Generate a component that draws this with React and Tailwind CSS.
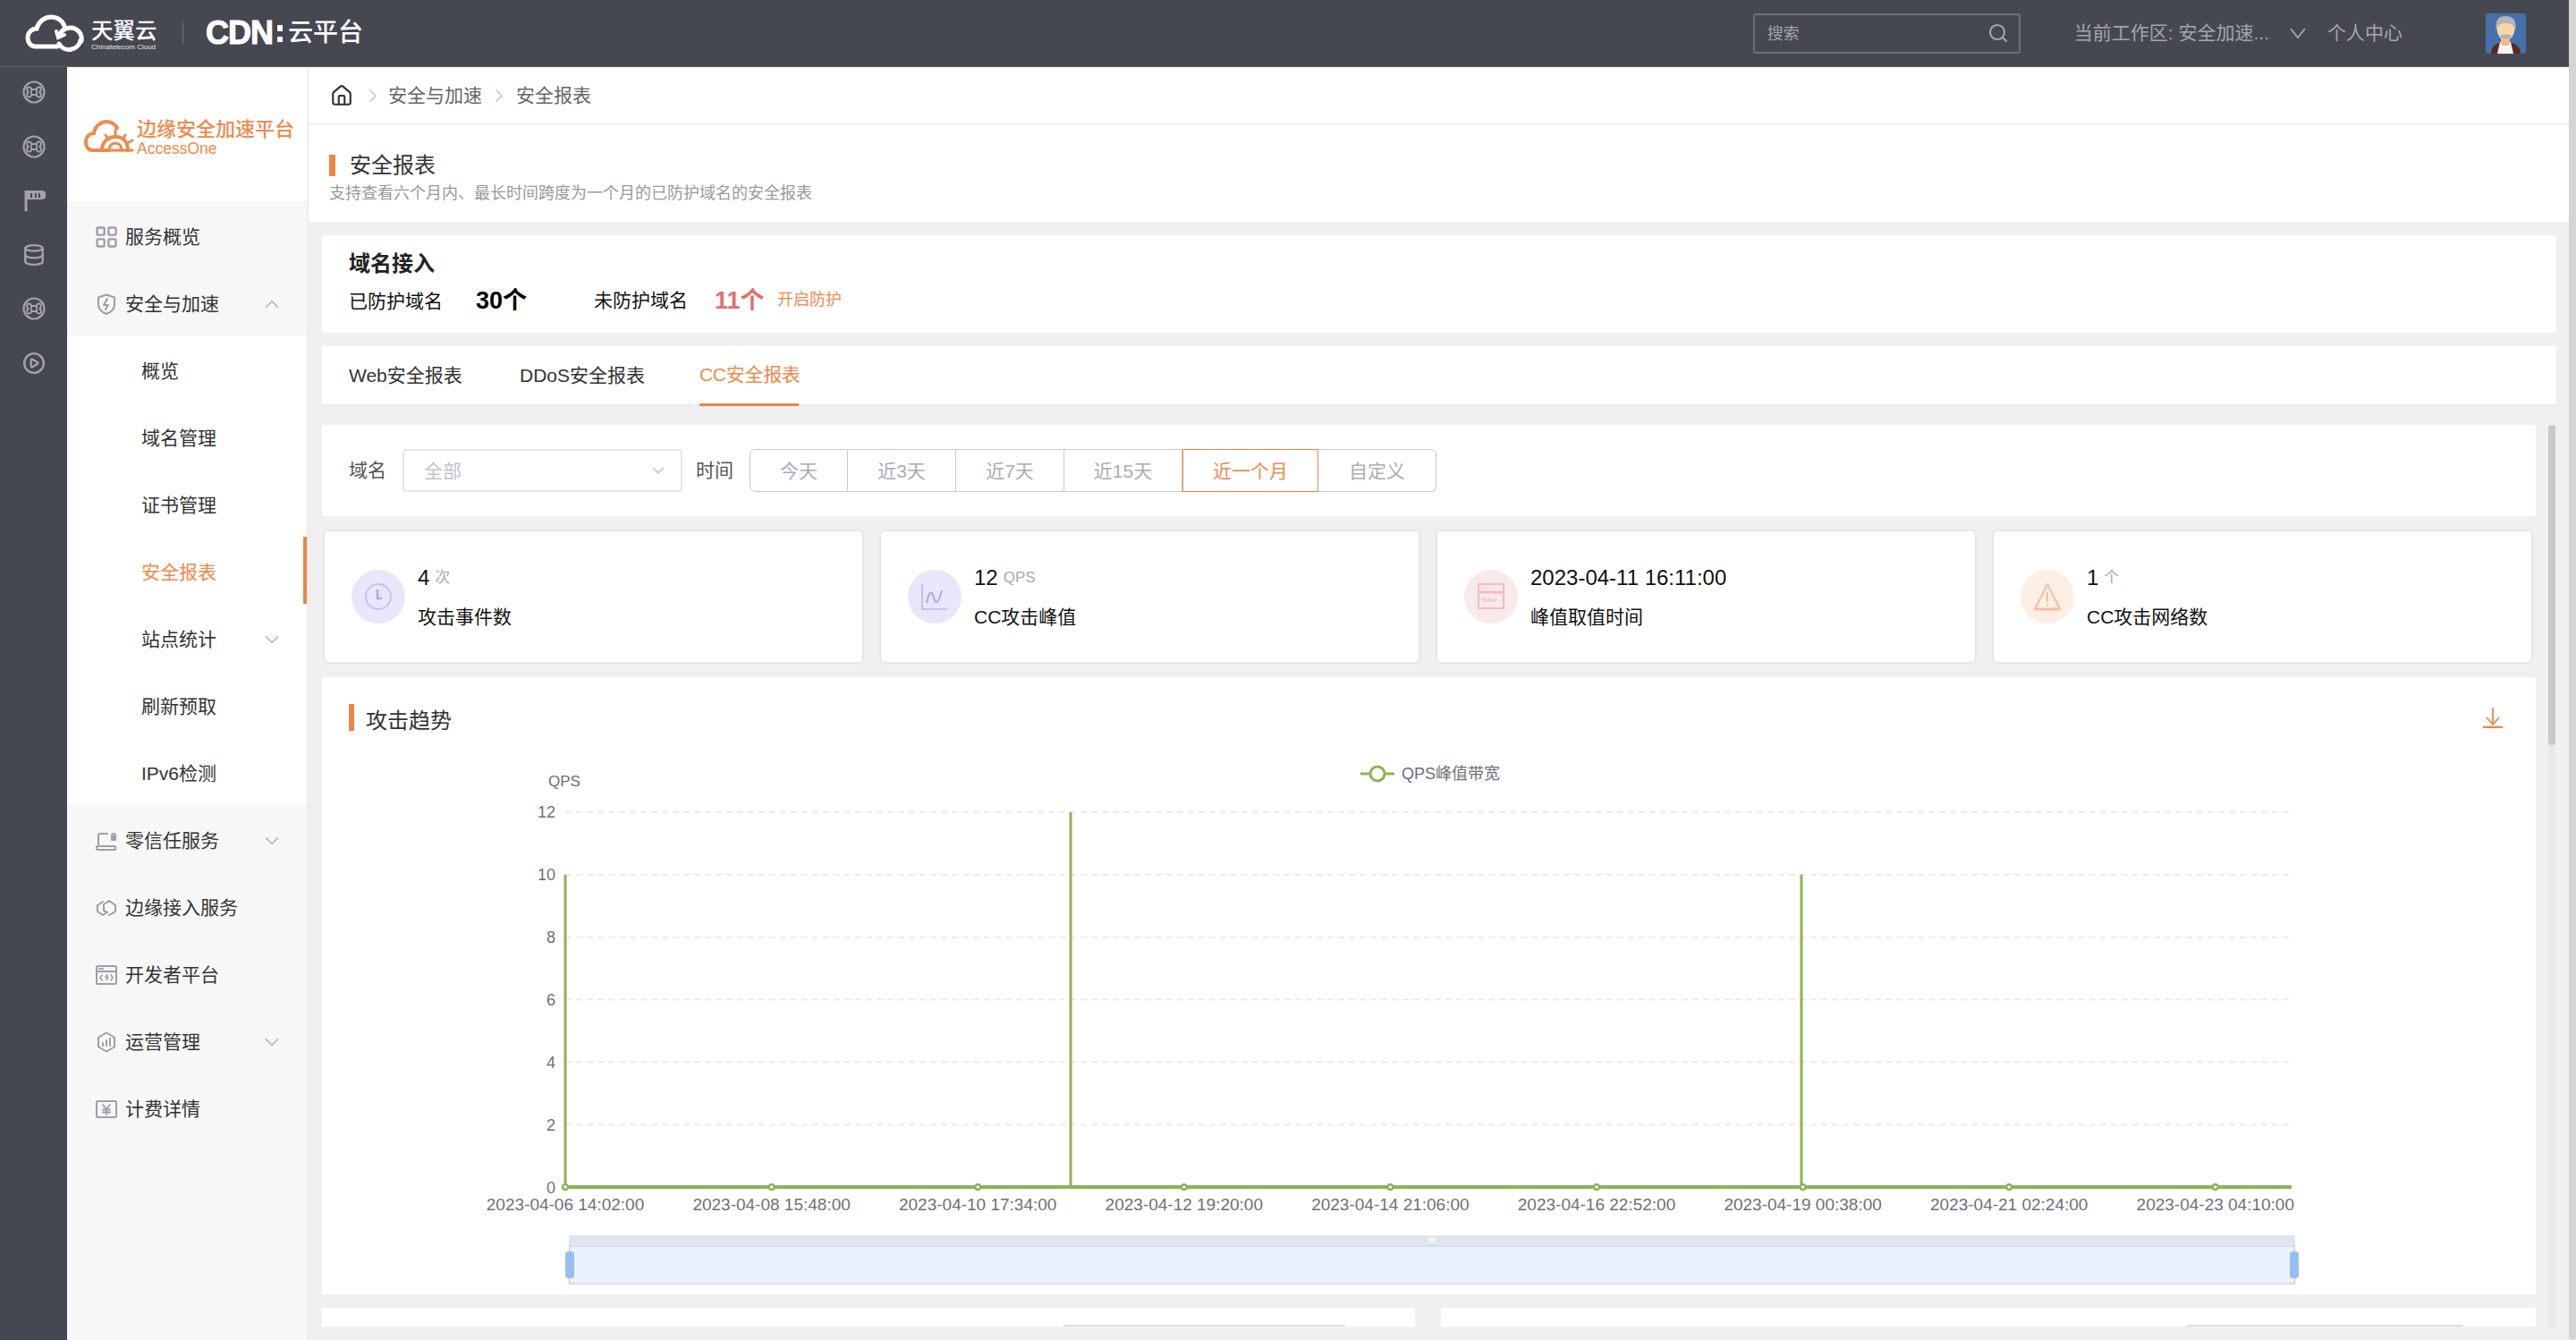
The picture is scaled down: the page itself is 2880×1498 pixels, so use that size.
import { ChevronDown, ChevronUp, ChevronRight, Search, Database, CirclePlay, LayoutGrid, Home } from 'lucide-react'

const fontStack = "font-['Liberation_Sans','Noto_Sans_CJK_SC',sans-serif]"

const CircleCmd = () => (
    <svg width="26" height="26" viewBox="0 0 26 26" fill="none" stroke="#a1a3a9" strokeWidth="2.2">
        <circle cx="13" cy="13" r="11.5" />
        <path d="M10 10h6v6h-6z M10 10a2.5 2.5 0 1 0-2.5 2.5 M16 10a2.5 2.5 0 1 1 2.5 2.5 M10 16a2.5 2.5 0 1 1-2.5-2.5 M16 16a2.5 2.5 0 1 0 2.5-2.5" strokeWidth="1.8" />
    </svg>
)

const FlagIcon = () => (
    <svg width="26" height="26" viewBox="0 0 26 26" fill="none" stroke="#a1a3a9" strokeWidth="2">
        <path d="M4 2v23" strokeWidth="3" />
        <path d="M4 3h18a2 2 0 0 1 0 8H4z" fill="#a1a3a9" />
        <path d="M10 5v5M15 5v5M19 5v5" stroke="#454851" strokeWidth="2" />
    </svg>
)

const RailIcon = ({ children }) => (
    <div className="h-[60.5px] flex items-center justify-center">{children}</div>
)

const MenuIcon = ({ children }) => (
    <svg width="24" height="24" viewBox="0 0 24 24" fill="none" stroke="#9c9fa8" strokeWidth="2" strokeLinejoin="round" strokeLinecap="round">
        {children}
    </svg>
)

const menuIcons = {
    grid: <LayoutGrid size={28} color="#9c9fa8" strokeWidth={2} className="-ml-[2px]" />,
    shield: <MenuIcon><path d="M12 1.5l9 3v8c0 5-4 8.5-9 10.5-5-2-9-5.5-9-10.500v-8z" /><path d="M13 6l-4 7h5l-3 5" /></MenuIcon>,
    lock: <MenuIcon><path d="M13 4H5a2 2 0 0 0-2 2v11" /><path d="M1 21a2 2 0 0 1 2-3h18a2 2 0 0 1 1 3 1 1 0 0 1-1 1H3a2 2 0 0 1-2-1z" /><rect x="17" y="6" width="6" height="6" rx="1" fill="#9c9fa8" stroke="none" /><path d="M18 6a2 2 0 0 1 4 0" /></MenuIcon>,
    link: <MenuIcon><path d="M8 5L2 9v7l6 4 3-2" /><path d="M15 20l7-4V9l-7-5-6 4v7l4 2" /></MenuIcon>,
    code: <MenuIcon><rect x="1" y="2" width="22" height="20" rx="1.5" /><path d="M1 8h22" /><path d="M4 5h1M7 5h1" /><path d="M7 12l-2 3 2 3M17 12l2 3-2 3M13 11.5l-2 3h3l-2 3" strokeWidth="1.6" /></MenuIcon>,
    hex: <MenuIcon><path d="M12 1.5l9 5.25v10.5l-9 5.25-9-5.25V6.75z" /><path d="M8 16v-3M12 16V10M16 16V8" /></MenuIcon>,
    yen: <MenuIcon><rect x="1" y="3" width="22" height="18" rx="1.5" /><path d="M8 7l4 5 4-5M12 12v6M8 12.5h8M8 15.5h8" strokeWidth="1.8" /></MenuIcon>,
}

const topMenu = [
    { label: '服务概览', icon: 'grid' },
    { label: '安全与加速', icon: 'shield', chevron: 'up' },
]

const subMenu = [
    { label: '概览' },
    { label: '域名管理' },
    { label: '证书管理' },
    { label: '安全报表', active: true },
    { label: '站点统计', chevron: 'down' },
    { label: '刷新预取' },
    { label: 'IPv6检测' },
]

const bottomMenu = [
    { label: '零信任服务', icon: 'lock', chevron: 'down' },
    { label: '边缘接入服务', icon: 'link' },
    { label: '开发者平台', icon: 'code' },
    { label: '运营管理', icon: 'hex', chevron: 'down' },
    { label: '计费详情', icon: 'yen' },
]

const MenuRow = ({ item }) => (
    <div className="h-[75px] flex items-center pl-[32px] pr-[26px] pt-[5px] text-[21px] text-[#333]">
        <span className="w-[33px] flex items-center">{menuIcons[item.icon]}</span>
        <span>{item.label}</span>
        {item.chevron === 'up' && <ChevronUp size={26} color="#aaadb5" strokeWidth={1.3} className="ml-auto" />}
        {item.chevron === 'down' && <ChevronDown size={26} color="#aaadb5" strokeWidth={1.3} className="ml-auto" />}
    </div>
)

const Sidebar = () => (
    <aside className="w-[270px] shrink-0 bg-white border-r-2 border-[#ededed] flex flex-col">
        <div className="h-[150px] flex items-center pl-[19px] pt-[8px]">
            <svg width="56" height="42" viewBox="0 0 56 42" fill="none" stroke="#ed8a4c" strokeWidth="4" strokeLinecap="round">
                <path d="M28 35H10C4 35 2 30 2 26c0-6 4-10 9-10 1-8 8-13 14-13 5 0 10 3 12 7" />
                <path d="M20 35c0-9 6-15 15-15s14 6 14 15" />
                <path d="M28 35c0-5 3-8 7-8s7 3 7 8" strokeWidth="3" />
                <path d="M35 12v6M24 18l3 5M46 18l-3 5M50 26l4-2M18 35h36" strokeWidth="3" />
            </svg>
            <div className="ml-[3px] flex flex-col">
                <span className="text-[22px] leading-[24px] text-[#ed8a4c] font-medium whitespace-nowrap">边缘安全加速平台</span>
                <span className="text-[17.5px] leading-[18px] text-[#ed8a4c]">AccessOne</span>
            </div>
        </div>
        <div className="bg-[#f7f7f7]">
            {topMenu.map((item) => <MenuRow key={item.label} item={item} />)}
        </div>
        {subMenu.map((item) => (
            <div key={item.label} className={`h-[75px] flex items-center pl-[83px] pt-[5px] text-[21px] ${item.active ? 'pr-[22px] text-[#ed8a4c] border-r-4 border-[#ed8546]' : 'pr-[26px] text-[#333]'}`}>
                <span>{item.label}</span>
                {item.chevron && <ChevronDown size={26} color="#aaadb5" strokeWidth={1.3} className="ml-auto" />}
            </div>
        ))}
        <div className="flex-1 bg-[#f7f7f7]">
            {bottomMenu.map((item) => <MenuRow key={item.label} item={item} />)}
        </div>
    </aside>
)

const Header = () => (
    <header className="h-[75px] shrink-0 bg-[#454851] border-b border-[#5b5e66] flex items-center text-white">
        <svg width="68" height="44" viewBox="0 0 68 44" fill="none" stroke="#fff" strokeWidth="5" className="ml-[28px]" strokeLinecap="round">
            <path d="M36 37H12C6 37 3 32 3 27c0-6 5-10 10-10 2-8 9-13 16-13 7 0 13 4 15 10" />
            <path d="M38 26a13 13 0 0 1 22-6 13 13 0 0 1 3 11" />
            <path d="M62 30a13 13 0 0 1-24 4" />
            <path d="M35 20l2 7 7-3" strokeWidth="4" />
        </svg>
        <div className="ml-[6px] flex flex-col w-[76px] pt-[5px]">
            <span className="text-[24.5px] leading-[28px] font-medium whitespace-nowrap">天翼云</span>
            <span className="text-[8px] leading-[10px] -mt-[1px] text-[#e6e6e6] whitespace-nowrap">Chinatelecom Cloud</span>
        </div>
        <div className="ml-[26px] w-[1px] h-[25px] bg-[#70737a]" />
        <span className="ml-[25px] text-[36px] leading-none font-bold tracking-[-1px] [-webkit-text-stroke:1px_white] whitespace-nowrap">CDN</span>
        <div className="ml-[5px] flex flex-col gap-[6px]">
            <div className="w-[6px] h-[7px] bg-white" />
            <div className="w-[6px] h-[6px] bg-white" />
        </div>
        <span className="ml-[6px] text-[28px] leading-none font-medium whitespace-nowrap">云平台</span>
        <div className="ml-auto w-[299px] h-[45px] border-2 border-[#6d7078] rounded-[3px] flex items-center pl-[14px] pr-[11px] text-[18px] text-[#a0a3a8]">
            <span className="pt-[2px]">搜索</span>
            <Search size={24} color="#a0a3a8" strokeWidth={2.2} className="ml-auto" />
        </div>
        <span className="ml-[60px] text-[21px] text-[#a3a6ab] whitespace-nowrap">当前工作区: 安全加速...</span>
        <svg width="18" height="12" viewBox="0 0 18 12" fill="none" stroke="#a3a6ab" strokeWidth="1.8" className="ml-[23px]">
            <path d="M1 1l8 10 8-10" />
        </svg>
        <span className="ml-[24px] text-[21px] text-[#a3a6ab] whitespace-nowrap">个人中心</span>
        <svg width="45" height="45" viewBox="0 0 45 45" className="ml-[93px] mr-[48px] rounded-[3px]">
            <rect width="45" height="45" fill="#4670ab" />
            <path d="M6 45c0-9 6-13 16-13s17 4 17 13z" fill="#5a2d18" />
            <path d="M13 45l3-13h12l3 13z" fill="#f3f3f3" />
            <path d="M17 26h10v8c-2 3-8 3-10 0z" fill="#f2b88a" />
            <ellipse cx="22.5" cy="17" rx="10" ry="13" fill="#f9d7ae" />
            <path d="M12 20C10 8 14 3 22.5 3S35 8 33 20c-1-6-3-9-10.5-9S13 14 12 20z" fill="#b5b5b5" />
            <path d="M16 25c3-2 10-2 13 0-1 3-3 4-6.5 4S17 28 16 25z" fill="#b9b0a4" />
        </svg>
    </header>
)

const Breadcrumb = () => (
    <div className="h-[65px] shrink-0 bg-white border-b-2 border-[#f0f0f0] flex items-center pl-[24px] text-[21px] text-[#666]">
        <Home size={26} color="#333" strokeWidth={2} />
        <ChevronRight size={24} color="#c0c4cc" strokeWidth={1.5} className="ml-[10px]" />
        <span className="ml-[5px]">安全与加速</span>
        <ChevronRight size={24} color="#c0c4cc" strokeWidth={1.5} className="ml-[7px]" />
        <span className="ml-[7px]">安全报表</span>
    </div>
)

const PageTitle = () => (
    <div className="h-[108px] shrink-0 bg-white pl-[23px] pt-[33px]">
        <div className="flex items-center h-[24px]">
            <div className="w-[7px] h-[24px] bg-[#ed8546]" />
            <span className="ml-[16px] text-[24px] text-[#333]">安全报表</span>
        </div>
        <p className="mt-[7px] text-[18px] leading-[24px] text-[#999]">支持查看六个月内、最长时间跨度为一个月的已防护域名的安全报表</p>
    </div>
)

const DomainCard = () => (
    <div className="h-[109px] bg-white pl-[30px] pt-[18px]">
        <div className="text-[24px] leading-[28px] font-bold text-[#222]">域名接入</div>
        <div className="flex items-center mt-[9px] h-[36px]">
            <span className="w-[142px] text-[21px] pt-[2px] text-[#111]">已防护域名</span>
            <span className="w-[132px] text-[27px] font-bold text-black">30个</span>
            <span className="w-[135px] text-[21px] text-[#111]">未防护域名</span>
            <span className="w-[70px] text-[27px] font-bold text-[#e26f6f]">11个</span>
            <span className="text-[18px] text-[#ed8a4c] -mt-[2px]">开启防护</span>
        </div>
    </div>
)

const Tabs = () => (
    <div className="h-[67px] mt-[15px] bg-white border-b-2 border-[#eaeaea] flex pl-[30px] text-[21px] text-[#333] whitespace-nowrap">
        <div className="w-[191px] flex items-center">Web安全报表</div>
        <div className="w-[201px] flex items-center">DDoS安全报表</div>
        <div className="w-[111px] h-[67px] flex items-center text-[#ed8a4c] border-b-[3px] border-[#ed8546] tracking-[-0.3px]">CC安全报表</div>
    </div>
)

const ranges = [
    { label: '今天', w: 'w-[110px]', cls: 'rounded-l-[6px] border-l' },
    { label: '近3天', w: 'w-[121px]', cls: '' },
    { label: '近7天', w: 'w-[121px]', cls: '' },
    { label: '近15天', w: 'w-[132px]', cls: '' },
    { label: '近一个月', w: 'w-[152px]', active: true, cls: '' },
    { label: '自定义', w: 'w-[132px]', cls: 'rounded-r-[6px]' },
]

const FilterBar = () => (
    <div className="h-[102px] bg-white flex items-center pl-[30px] text-[21px] text-[#555]">
        <span className="w-[60px]">域名</span>
        <div className="w-[313px] h-[48px] border-2 border-[#e4e6ec] rounded-[4px] flex items-center pl-[22px] pr-[14px] text-[#c0c4cc]">
            <span className="pt-[2px]">全部</span>
            <ChevronDown size={22} color="#b9bcc6" strokeWidth={1.5} className="ml-auto" />
        </div>
        <span className="ml-[15px] w-[60px]">时间</span>
        <div className="flex h-[48px]">
            {ranges.map((r) => (
                <div key={r.label} className={`${r.w} ${r.cls} pt-[2px] flex items-center justify-center ${r.active ? 'border-[1.5px] border-[#ed8546] text-[#ed8a4c]' : 'border-y-[1.5px] border-r border-[#c4c8d3] text-[#a9acb4]'}`}>{r.label}</div>
            ))}
        </div>
    </div>
)

const statIcons = {
    clock: (
        <svg width="38" height="38" viewBox="0 0 38 38" fill="none" stroke="#c6bff2" strokeWidth="2">
            <circle cx="19" cy="19" r="14" />
            <path d="M18 11v10h5" stroke="#b0a7ee" strokeWidth="2.5" />
        </svg>
    ),
    chart: (
        <svg width="38" height="38" viewBox="0 0 38 38" fill="none" stroke="#c6bff2" strokeWidth="2">
            <path d="M5 5v28h28" />
            <path d="M10 26c3-14 6-14 8-6s5 8 9-8" stroke="#b0a7ee" />
        </svg>
    ),
    www: (
        <svg width="38" height="38" viewBox="0 0 38 38" fill="none" stroke="#f6bcbc" strokeWidth="2">
            <rect x="5" y="5" width="28" height="27" />
            <path d="M5 14h28" strokeWidth="3" />
            <path d="M9 9.5h1M13 9.5h1" strokeWidth="3" />
            <path d="M9 20l2 5 2-4 2 4 2-5 2 5 2-4 2 4 2-5" strokeWidth="1" />
        </svg>
    ),
    warn: (
        <svg width="38" height="38" viewBox="0 0 38 38" fill="none" stroke="#f8bd9a" strokeWidth="2" strokeLinejoin="round">
            <path d="M19 5L5 33h28z" />
            <path d="M19 14v11M19 28v1.5" />
            <path d="M5 33h28" strokeWidth="3" />
        </svg>
    ),
}

const stats = [
    { value: '4', unit: '次', label: '攻击事件数', icon: 'clock', bg: 'bg-[#e9e6fb]' },
    { value: '12', unit: 'QPS', label: 'CC攻击峰值', icon: 'chart', bg: 'bg-[#e9e6fb]' },
    { value: '2023-04-11 16:11:00', unit: '', label: '峰值取值时间', icon: 'www', bg: 'bg-[#f8e9ea]' },
    { value: '1', unit: '个', label: 'CC攻击网络数', icon: 'warn', bg: 'bg-[#fdeee6]' },
]

const StatCards = () => (
    <div className="mt-[15px] h-[150px] flex gap-[17px] pl-[1px]">
        {stats.map((s) => (
            <div key={s.label} className="w-[605px] bg-white border-2 border-[#e6e6e6] rounded-[6px] flex items-center pl-[30px]">
                <div className={`w-[60px] h-[60px] rounded-full flex items-center justify-center ${s.bg}`}>{statIcons[s.icon]}</div>
                <div className="ml-[14px] flex flex-col">
                    <div className="h-[36px] flex items-center whitespace-nowrap -mt-[2px]">
                        <span className="text-[24px] text-[#111]">{s.value}</span>
                        {s.unit && <span className="ml-[6px] text-[17px] text-[#aaa]">{s.unit}</span>}
                    </div>
                    <span className="mt-[12px] text-[21px] leading-[28px] text-[#111]">{s.label}</span>
                </div>
            </div>
        ))}
    </div>
)

const yTicks = [12, 10, 8, 6, 4, 2, 0]
const xTicks = [
    '2023-04-06 14:02:00', '2023-04-08 15:48:00', '2023-04-10 17:34:00', '2023-04-12 19:20:00', '2023-04-14 21:06:00',
    '2023-04-16 22:52:00', '2023-04-19 00:38:00', '2023-04-21 02:24:00', '2023-04-23 04:10:00',
]

// chart coordinates: svg starts 360 from page left, 834 from page top
const yPos = (v) => 493 - v * 34.92
const xPos = (i) => 272 + i * 230.6

const TrendChart = () => (
    <svg width="2475" height="547" viewBox="0 0 2475 547" className="block">
        <g fontFamily="'Liberation Sans','Noto Sans CJK SC',sans-serif">
            <text x="271" y="45" textAnchor="middle" fontSize="17" fill="#6e7079">QPS</text>
            {yTicks.map((t) => (
                <g key={t}>
                    {t > 0 && <line x1="272" x2="2202" y1={yPos(t)} y2={yPos(t)} stroke="#e0e6f1" strokeWidth="1.5" strokeDasharray="7 5" />}
                    <text x="261" y={yPos(t) + 6.5} textAnchor="end" fontSize="18" fill="#6e7079">{t}</text>
                </g>
            ))}
            {xTicks.map((t, i) => (
                <text key={t} x={xPos(i)} y={519} textAnchor="middle" fontSize="19" fill="#6e7079">{t}</text>
            ))}
            <path d={`M272 ${yPos(10)}V${yPos(0)}M837 ${yPos(0)}V${yPos(12)}M1654 ${yPos(0)}V${yPos(10)}`} fill="none" stroke="#8fb155" strokeWidth="3" />
            <path d={`M272 ${yPos(0)}H2202`} fill="none" stroke="#8fb155" strokeWidth="4" />
            {xTicks.map((t, i) => (
                <circle key={t} cx={xPos(i)} cy={yPos(0)} r="3" fill="#fff" stroke="#8fb155" strokeWidth="2.5" />
            ))}
            <path d="M1161 31h38" stroke="#8fb155" strokeWidth="3" />
            <circle cx="1180" cy="31" r="8" fill="#fff" stroke="#8fb155" strokeWidth="3" />
            <text x="1207" y="37" fontSize="18" fill="#6e7079">QPS峰值带宽</text>
        </g>
    </svg>
)

const DataZoom = () => (
    <div className="ml-[276px] w-[1930px] flex flex-col">
        <div className="h-[11px] bg-[#dfe4ef] flex items-center justify-center gap-[1px]">
            <div className="w-[2px] h-[5px] bg-white" />
            <div className="w-[2px] h-[5px] bg-white" />
            <div className="w-[2px] h-[5px] bg-white" />
        </div>
        <div className="h-[44px] bg-[#e8f2fc] border-y-2 border-[#d8dfec] border-x border-x-[#b5c4de] flex items-center justify-between">
            <div className="w-[10px] h-[30px] -ml-[5px] bg-[#93c0f3] border border-[#b5b9c9] rounded-[3px]" />
            <div className="w-[10px] h-[30px] -mr-[5px] bg-[#93c0f3] border border-[#b5b9c9] rounded-[3px]" />
        </div>
    </div>
)

const TrendCard = () => (
    <div className="mt-[15px] h-[690px] bg-white flex flex-col">
        <div className="h-[77px] shrink-0 flex items-start pt-[30px] pl-[30px] pr-[36px]">
            <div className="w-[6px] h-[30px] bg-[#ed8546]" />
            <span className="ml-[13px] text-[24px] leading-[30px] pt-[4px] text-[#333]">攻击趋势</span>
            <svg width="24" height="24" viewBox="0 0 24 24" fill="none" stroke="#ed8546" strokeWidth="1.8" className="ml-auto mt-[3px]">
                <path d="M12 1v18M5 12l7 8 7-8" />
                <path d="M1 23h22" strokeWidth="2.5" />
            </svg>
        </div>
        <TrendChart />
        <DataZoom />
    </div>
)

const LowerCards = () => (
    <div className="mt-[15px] flex gap-[29px]">
        <div className="w-[1222px] h-[120px] bg-white pl-[828px] pt-[19px]">
            <div className="w-[317px] h-[48px] border-2 border-[#dcdee3] rounded-[4px]" />
        </div>
        <div className="w-[1224px] h-[120px] bg-white pl-[832px] pt-[19px]">
            <div className="w-[312px] h-[48px] border-2 border-[#dcdee3] rounded-[4px]" />
        </div>
    </div>
)

const App = () => {
    return (
        <div className={`w-[2880px] h-[1498px] flex overflow-hidden bg-[#f0f0f0] ${fontStack}`}>
            <div className="w-[2872px] flex flex-col">
                <Header />
                <div className="flex-1 min-h-0 flex">
                    <nav className="w-[75px] shrink-0 bg-[#454851]">
                        <div className="-mt-[2px]">
                            <RailIcon><CircleCmd /></RailIcon>
                            <RailIcon><CircleCmd /></RailIcon>
                            <RailIcon><FlagIcon /></RailIcon>
                            <RailIcon><Database size={26} color="#a1a3a9" strokeWidth={2.2} /></RailIcon>
                            <RailIcon><CircleCmd /></RailIcon>
                            <RailIcon><CirclePlay size={26} color="#a1a3a9" strokeWidth={2.2} /></RailIcon>
                        </div>
                    </nav>
                    <Sidebar />
                    <main className="flex-1 min-w-0 flex flex-col">
                        <Breadcrumb />
                        <PageTitle />
                        <div className="flex-1 min-h-0 flex flex-col pl-[15px] pr-[14px] pb-[15px]">
                            <div className="mt-[15px]"><DomainCard /></div>
                            <Tabs />
                            <div className="flex-1 min-h-0 mt-[21px] flex overflow-hidden">
                                <div className="w-[2475px] shrink-0">
                                    <FilterBar />
                                    <StatCards />
                                    <TrendCard />
                                    <LowerCards />
                                </div>
                                <div className="ml-[14px] w-[8px] bg-[#e9e9e9]">
                                    <div className="h-[358px] bg-[#c8c8c8] rounded-[4px]" />
                                </div>
                            </div>
                        </div>
                    </main>
                </div>
            </div>
            <div className="w-[8px] h-full bg-[#d4d4d4] rounded-b-[4px]" />
        </div>
    )
}

export default App
